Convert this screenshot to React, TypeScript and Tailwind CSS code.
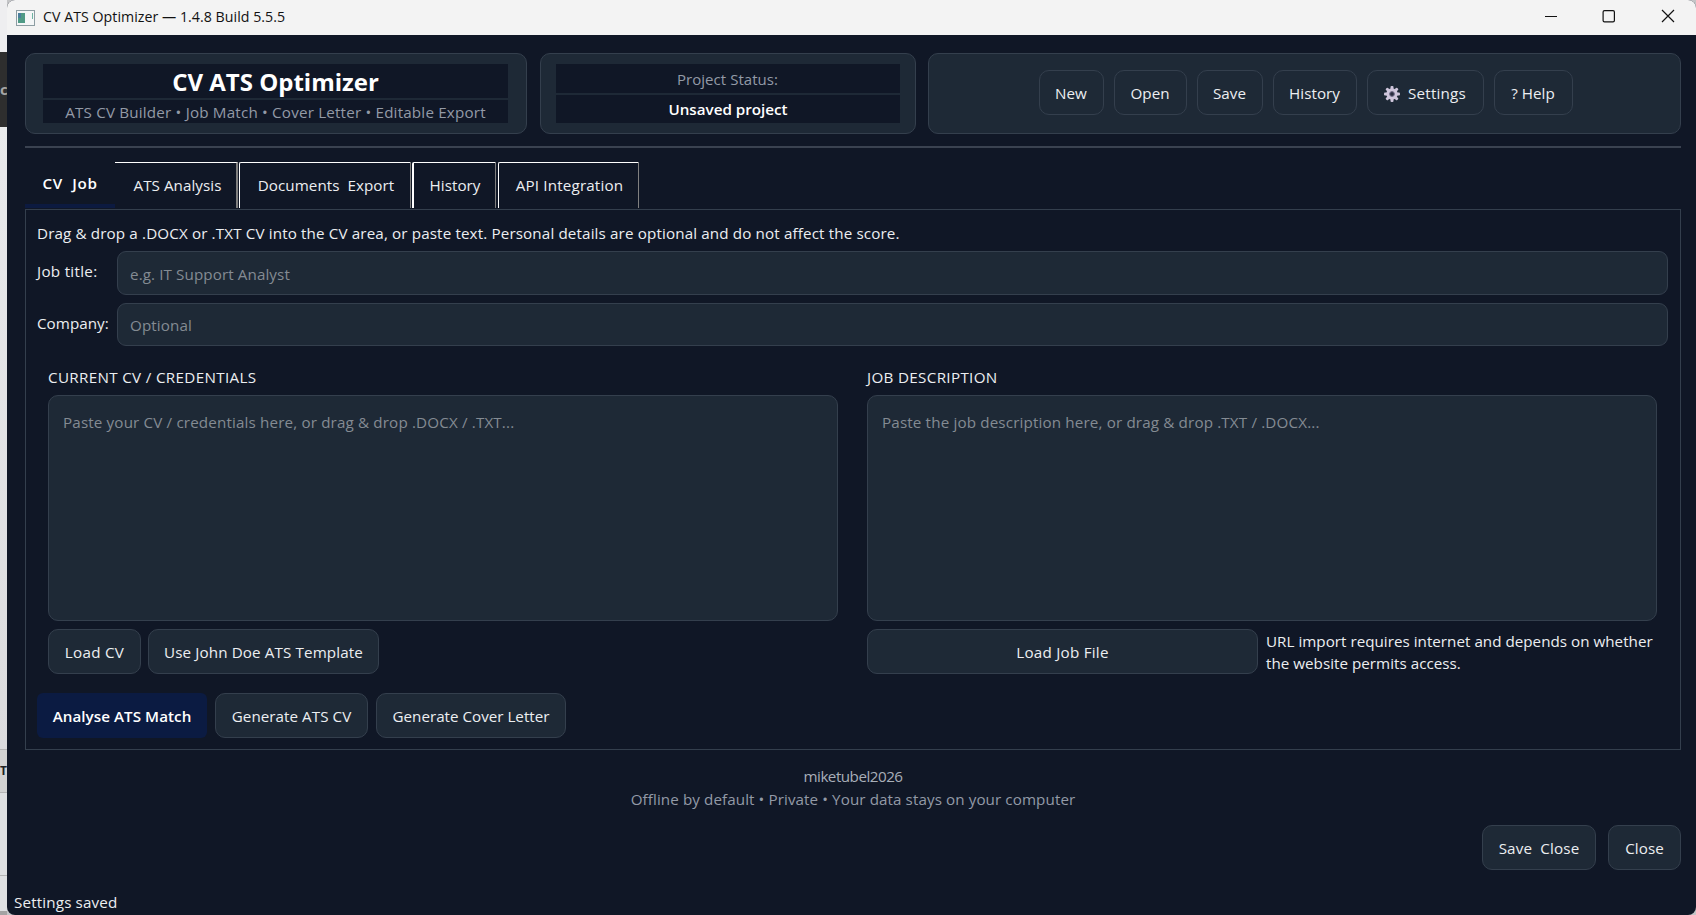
import React from 'react'
import clsx from 'clsx'

interface ButtonProps {
  children: React.ReactNode
  className?: string
}

function Button(props: ButtonProps) {
  return (
    <button
      type="button"
      className={clsx(
        'flex items-center justify-center h-[45px] pt-0.5 shrink-0 rounded-[10px] border border-[#343f4d] bg-[#1e2936] text-[#eceef1] whitespace-pre',
        props.className
      )}
    >
      {props.children}
    </button>
  )
}

interface FieldProps {
  label: string
  placeholder: string
  className?: string
  labelClass: string
  inputClass: string
}

function Field(props: FieldProps) {
  return (
    <div className={clsx('flex', props.className)}>
      <label className={clsx('w-20 shrink-0 leading-[22px]', props.labelClass)}>{props.label}</label>
      <input
        className={clsx(
          'flex-1 rounded-[9px] border border-[#343f4d] bg-[#1e2936] px-3 tracking-[0.1px] placeholder:text-[#848b93] placeholder:opacity-100 outline-none',
          props.inputClass
        )}
        type="text"
        placeholder={props.placeholder}
      />
    </div>
  )
}

interface AreaProps {
  title: string
  placeholder: string
  children: React.ReactNode
}

function Area(props: AreaProps) {
  return (
    <div className="w-[790px]">
      <div className="h-[29px] leading-[22px] tracking-[0.33px]">{props.title}</div>
      <textarea
        className="block w-full h-[226px] resize-none rounded-[10px] border border-[#343f4d] bg-[#1e2936] px-3.5 py-[15px] leading-[22px] tracking-[0.15px] placeholder:text-[#848b93] placeholder:opacity-100 outline-none"
        placeholder={props.placeholder}
      />
      <div className="flex mt-2">{props.children}</div>
    </div>
  )
}

function GearIcon() {
  const teeth = [0, 45, 90, 135, 180, 225, 270, 315]
  return (
    <svg width="16" height="16" viewBox="0 0 16 16">
      {teeth.map((a) => (
        <rect key={a} x="6.5" y="0" width="3" height="4" rx="1" fill="#cfc6dc" transform={`rotate(${a} 8 8)`} />
      ))}
      <circle cx="8" cy="8" r="4.1" fill="none" stroke="#cfc6dc" strokeWidth="3.2" />
      <circle cx="8" cy="8" r="2.4" fill="#2a2d40" stroke="#8d84a3" strokeWidth="0.8" />
    </svg>
  )
}

function AppIcon() {
  return (
    <svg width="19" height="16" viewBox="0 0 19 16">
      <rect x="0.5" y="0.5" width="18" height="15" fill="#f4f6f7" stroke="#8d9da3" />
      <rect x="2" y="3" width="7" height="10" fill="#4f9a86" />
      <rect x="2" y="3" width="3" height="5" fill="#4a7f9c" />
      <rect x="16" y="3" width="1" height="6" fill="#6fb3a2" />
    </svg>
  )
}

function TitleBar() {
  return (
    <div className="flex items-center h-[35px] bg-[#f3f3f3] pl-[9px] pr-[21px] text-[#111]">
      <AppIcon />
      <span className="ml-2 -mt-px text-[14.2px] tracking-[0.03px]">CV ATS Optimizer — 1.4.8 Build 5.5.5</span>
      <svg className="ml-auto -mt-1" width="130" height="14" viewBox="0 0 130 14" fill="none" stroke="#111" strokeWidth="1.2">
        <path d="M0 7.5h12" />
        <rect x="58.1" y="1.6" width="11.3" height="11.3" rx="1.4" />
        <path d="M117 1l12 12M129 1l-12 12" />
      </svg>
    </div>
  )
}

function Header() {
  return (
    <div className="flex h-[81px] text-center">
      <div className="w-[502px] mr-[13px] pl-[17px] pr-[18px] py-2.5 rounded-[10px] border border-[#343f4d] bg-[#1e2936]">
        <div className="h-[34px] bg-[#101726] text-white text-[24px] leading-[35px] font-bold tracking-normal">CV ATS Optimizer</div>
        <div className="mt-0.5 h-[23px] bg-[#101726] text-[#939aa6] leading-[24px] tracking-[0.19px]">
          ATS CV Builder • Job Match • Cover Letter • Editable Export
        </div>
      </div>
      <div className="w-[376px] mr-3 px-[15px] py-2.5 rounded-[10px] border border-[#343f4d] bg-[#1e2936]">
        <div className="h-[29px] bg-[#101726] text-[#939aa6] text-[15px] leading-[31px] pr-px">Project Status:</div>
        <div className="mt-0.5 h-7 bg-[#101726] text-white leading-[28px] font-semibold tracking-normal">Unsaved project</div>
      </div>
      <div className="flex flex-1 items-start justify-center gap-2.5 pt-4 pl-0.5 rounded-[10px] border border-[#343f4d] bg-[#1e2936]">
        <Button className="w-[65px]">New</Button>
        <Button className="w-[73px]">Open</Button>
        <Button className="w-[66px]">Save</Button>
        <Button className="w-[84px]">History</Button>
        <Button className="w-[117px] gap-2 tracking-[0.2px]">
          <GearIcon />
          Settings
        </Button>
        <Button className="w-[79px]">? Help</Button>
      </div>
    </div>
  )
}

function Tabs() {
  return (
    <div className="flex h-[46px] mt-3.5 mb-px text-[#eceef1] leading-[22px] whitespace-pre text-center">
      <div className="w-[90px] pt-2.5 border-b-4 border-[#0c1a40] text-white font-semibold tracking-[0.7px]">CV  Job</div>
      <div className="w-[123px] pt-[11px] pl-1 border-t border-t-white border-r-2 border-r-[#808080]">ATS Analysis</div>
      <div className="w-[172px] ml-px pt-[11px] pl-0.5 border-t border-l border-r border-t-white border-l-white border-r-[#808080] rounded-tl-xs">
        Documents  Export
      </div>
      <div className="w-[84px] ml-px pt-[11px] pl-px border-t border-l-2 border-r border-t-white border-l-white border-r-[#808080] rounded-tl-xs">
        History
      </div>
      <div className="w-[141px] ml-0.5 pt-[11px] pl-0.5 border-t border-l border-r border-t-white border-l-white border-r-[#808080] rounded-tl-xs tracking-[0.16px]">
        API Integration
      </div>
    </div>
  )
}

function JobPane() {
  return (
    <div className="h-[541px] border border-[#343f4d] pl-[11px] pr-3 pt-3">
      <p className="leading-[22px] h-[29px] tracking-[0.135px] whitespace-nowrap">
        Drag &amp; drop a .DOCX or .TXT CV into the CV area, or paste text. Personal details are optional and do not affect the score.
      </p>
      <Field className="h-11" label="Job title:" labelClass="pt-[9px] tracking-[0.3px]" inputClass="pt-[3px]" placeholder="e.g. IT Support Analyst" />
      <Field className="h-[43px] mt-2" label="Company:" labelClass="pt-[9px]" inputClass="pt-px" placeholder="Optional" />
      <div className="flex justify-between pl-[11px] pr-[11px] mt-5">
        <Area title="CURRENT CV / CREDENTIALS" placeholder="Paste your CV / credentials here, or drag & drop .DOCX / .TXT...">
          <Button className="w-[93px] tracking-[0.3px]">Load CV</Button>
          <Button className="w-[231px] ml-[7px] tracking-[0.12px]">Use John Doe ATS Template</Button>
        </Area>
        <Area title="JOB DESCRIPTION" placeholder="Paste the job description here, or drag & drop .TXT / .DOCX...">
          <Button className="w-[391px] tracking-[0.25px]">Load Job File</Button>
          <p className="ml-2 pt-px leading-[22px] tracking-[0.02px] whitespace-nowrap">
            URL import requires internet and depends on whether
            <br />
            the website permits access.
          </p>
        </Area>
      </div>
      <div className="flex mt-[19px]">
        <button type="button" className="w-[170px] h-[45px] pt-0.5 rounded-md bg-[#0b1b42] text-white font-semibold">
          Analyse ATS Match
        </button>
        <Button className="w-[153px] ml-2">Generate ATS CV</Button>
        <Button className="w-[190px] ml-2 tracking-normal">Generate Cover Letter</Button>
      </div>
    </div>
  )
}

// sliver of the window behind, visible at the left edge
function Backdrop() {
  return (
    <div className="w-[7px] shrink-0 flex flex-col bg-[#dfe0e2] overflow-hidden">
      <div className="h-[52px] bg-[#eeeef0]" />
      <div className="h-[75px] bg-[#2e2e2e] text-[#a5a5a5] text-[15px] font-bold leading-[75px]">c</div>
      <div className="h-[622px] bg-linear-to-b from-[#e9eaec] to-[#dcdcde]" />
      <div className="h-11 border-y border-[#b5b5b5] bg-[#d2d2d2] text-[#222] text-[12px] font-bold leading-[42px]">T</div>
      <div className="h-[83px] border-b border-[#b5b5b5]" />
      <div className="flex-1" />
      <div className="h-1 bg-[#a3a3a3]" />
    </div>
  )
}

export default function App() {
  return (
    <div className="flex w-[1696px] h-[915px] overflow-hidden bg-[#c4c5c7] text-[15.2px] tracking-[0.05px] font-['Open_Sans','Noto_Sans',sans-serif]">
      <Backdrop />
      <div className="flex-1 flex flex-col rounded-lg overflow-hidden bg-[#101726] text-[#eceef1]">
        <TitleBar />
        <div className="flex-1 flex flex-col pl-[18px] pr-[15px] pt-[18px]">
          <Header />
          <div className="mt-3 h-0.5 bg-[#3a4250]" />
          <Tabs />
          <JobPane />
          <div className="mt-[15px] text-center leading-[23px] text-[#939aa6]">
            <div className="text-[#a8aeb8] tracking-[-0.5px]">miketubel2026</div>
            <div className="tracking-[0.09px]">Offline by default • Private • Your data stays on your computer</div>
          </div>
          <div className="flex justify-end gap-3 mt-[14px]">
            <Button className="w-[114px] tracking-[0.15px]">Save  Close</Button>
            <Button className="w-[73px]">Close</Button>
          </div>
        </div>
        <div className="h-[25px] pl-[7px] leading-[25px] tracking-[0.15px]">Settings saved</div>
      </div>
    </div>
  )
}
